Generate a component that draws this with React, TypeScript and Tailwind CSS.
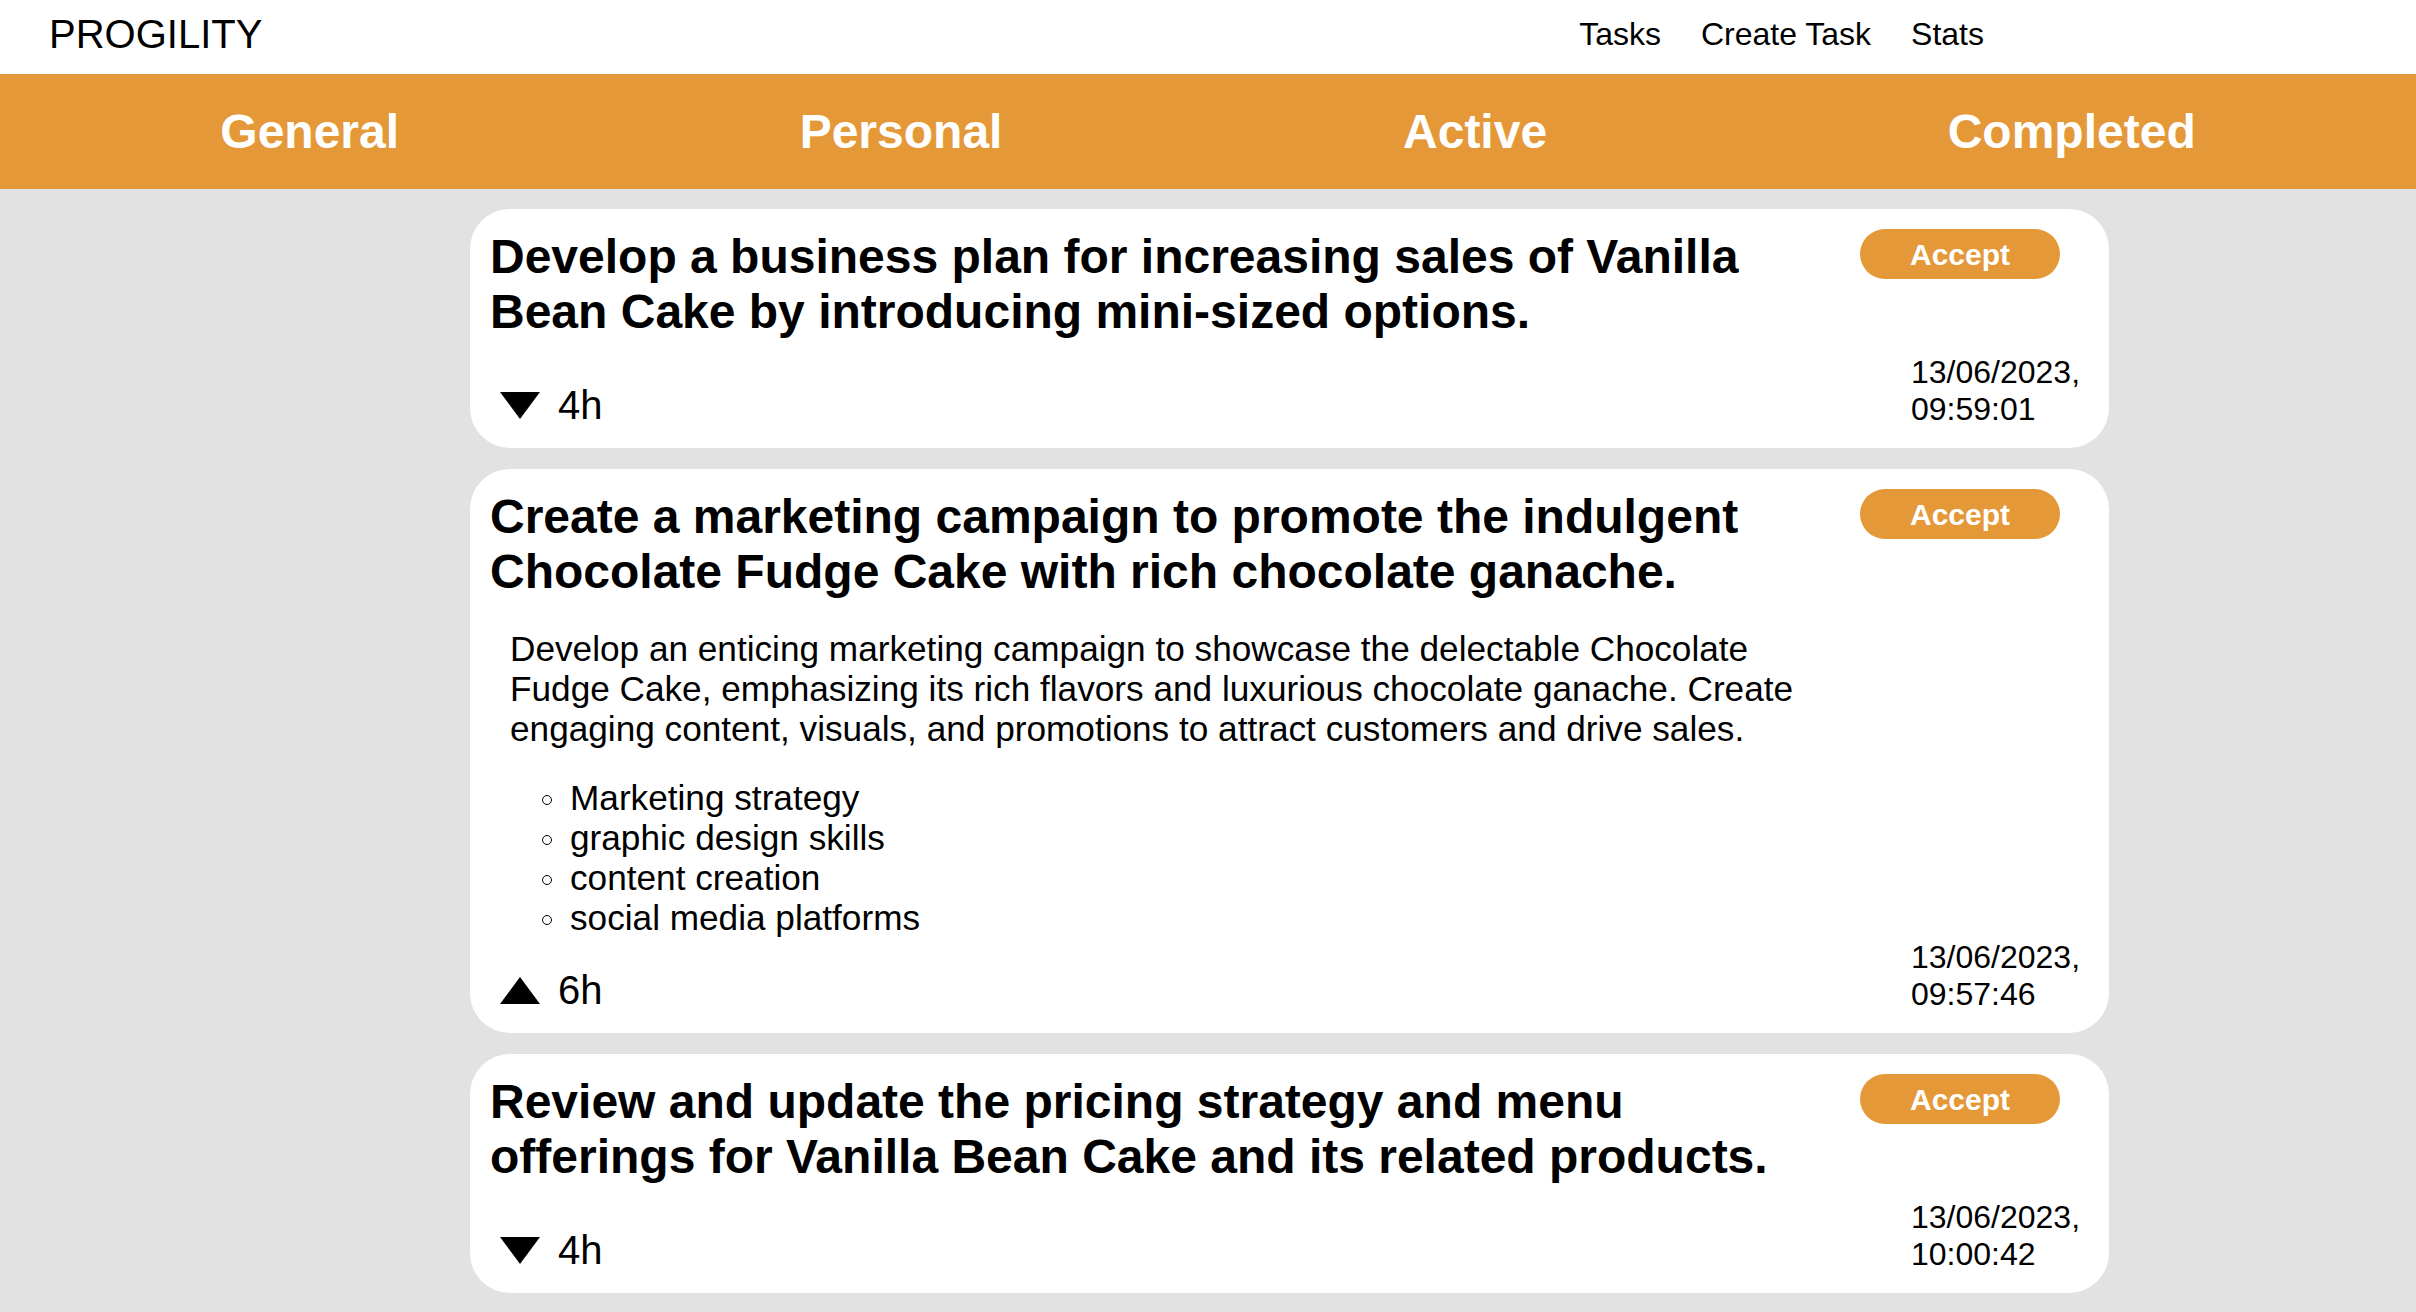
import React from "react";

type Task = {
  title: string;
  dir: "down" | "up";
  hours: string;
  date: string;
  time: string;
  description?: string;
  skills?: string[];
};

const tasks: Task[] = [
  {
    title:
      "Develop a business plan for increasing sales of Vanilla Bean Cake by introducing mini-sized options.",
    dir: "down",
    hours: "4h",
    date: "13/06/2023,",
    time: "09:59:01",
  },
  {
    title:
      "Create a marketing campaign to promote the indulgent Chocolate Fudge Cake with rich chocolate ganache.",
    dir: "up",
    hours: "6h",
    date: "13/06/2023,",
    time: "09:57:46",
    description:
      "Develop an enticing marketing campaign to showcase the delectable Chocolate Fudge Cake, emphasizing its rich flavors and luxurious chocolate ganache. Create engaging content, visuals, and promotions to attract customers and drive sales.",
    skills: [
      "Marketing strategy",
      "graphic design skills",
      "content creation",
      "social media platforms",
    ],
  },
  {
    title:
      "Review and update the pricing strategy and menu offerings for Vanilla Bean Cake and its related products.",
    dir: "down",
    hours: "4h",
    date: "13/06/2023,",
    time: "10:00:42",
  },
];

function Triangle({ dir }: { dir: "down" | "up" }) {
  return (
    <svg width="40" height="27" viewBox="0 0 40 27" className="shrink-0">
      {dir === "down" ? (
        <polygon points="0,0 40,0 20,27" fill="#000" />
      ) : (
        <polygon points="0,27 40,27 20,0" fill="#000" />
      )}
    </svg>
  );
}

function Card({ t }: { t: Task }) {
  return (
    <div className="flex min-h-[239px] rounded-[40px] bg-white p-[20px] gap-[20px]">
      <div className="flex flex-1 flex-col justify-between">
        <div>
          <h2 className="m-0 text-[48px] font-bold leading-[55px] text-black">
            {t.title}
          </h2>
          {t.description && (
            <p className="mt-[30px] pl-[20px] text-[35.2px] leading-[40px] text-black">
              {t.description}
            </p>
          )}
          {t.skills && (
            <ul className="mt-[29px] ml-[52px]">
              {t.skills.map((s) => (
                <li
                  key={s}
                  className="flex items-center text-[35.2px] leading-[40px] text-black"
                >
                  <span className="mt-[3px] mr-[18px] block h-[10px] w-[10px] shrink-0 rounded-full border-[1.5px] border-black" />
                  {s}
                </li>
              ))}
            </ul>
          )}
        </div>
        <div
          className={
            t.description
              ? "mt-[29px] flex items-center h-[46px] pl-[10px]"
              : "flex items-center h-[46px] pl-[10px]"
          }
        >
          <Triangle dir={t.dir} />
          <span className="ml-[18px] text-[40px] leading-[46px] text-black">
            {t.hours}
          </span>
        </div>
      </div>
      <div className="flex w-[249px] flex-col justify-between">
        <button className="ml-[20px] flex h-[50px] w-[200px] items-center justify-center rounded-full bg-[#e59838] text-[30px] font-bold text-white">
          Accept
        </button>
        <div className="ml-[71px] w-[178px] text-[32px] leading-[37px] text-black">
          <div>{t.date}</div>
          <div>{t.time}</div>
        </div>
      </div>
    </div>
  );
}

export default function App() {
  return (
    <div
      className="min-h-screen bg-[#e2e2e2] pb-[20px]"
      style={{ fontFamily: '"Liberation Sans", Arial, sans-serif' }}
    >
      <header className="flex h-[74px] items-center bg-white pb-[6px]">
        <div className="ml-[49px] text-[40px] leading-[46px] text-black">
          PROGILITY
        </div>
        <nav className="ml-auto mr-[432px] flex gap-[40px] text-[32px] leading-[37px] text-black">
          <a>Tasks</a>
          <a>Create Task</a>
          <a>Stats</a>
        </nav>
      </header>
      <div className="flex h-[115px] items-center justify-around bg-[#e59838] px-[20px] text-[48px] font-bold text-white">
        <span>General</span>
        <span>Personal</span>
        <span>Active</span>
        <span>Completed</span>
      </div>
      <div className="ml-[470px] mt-[20px] flex w-[1639px] flex-col gap-[21px]">
        {tasks.map((t) => (
          <Card key={t.time} t={t} />
        ))}
      </div>
    </div>
  );
}
